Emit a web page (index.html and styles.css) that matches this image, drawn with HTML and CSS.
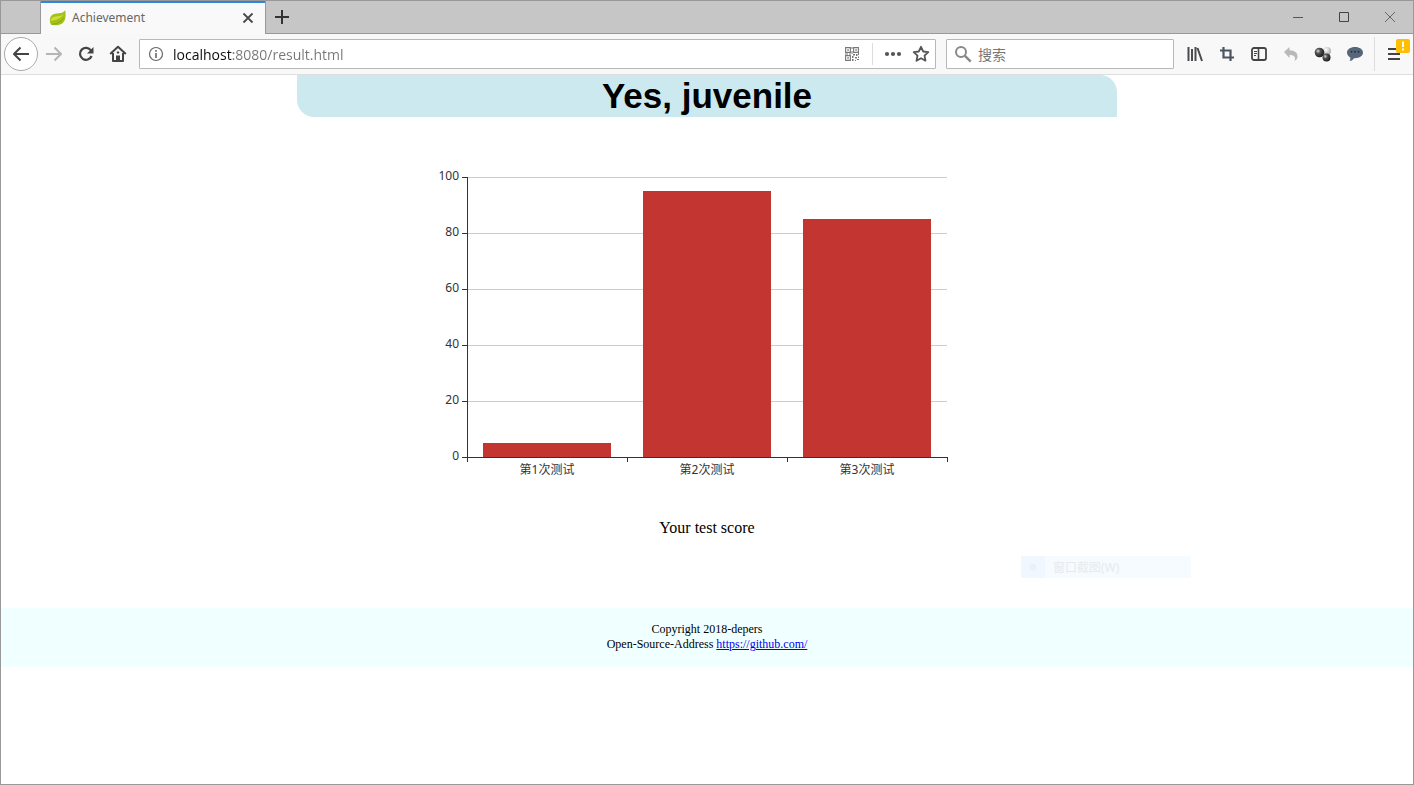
FILE: index.html
```html
<!DOCTYPE html>
<html lang="en">
<head>
<meta charset="utf-8">
<title>Achievement</title>
<link rel="stylesheet" href="styles.css">
</head>
<body>
<div class="window">
  <header class="chrome">
    <div class="tabstrip">
      <div class="tab">
        <svg class="favicon" width="18" height="18" viewBox="0 0 18 18" aria-hidden="true">
          <path fill="#a3c11a" d="M16.200 1.200c.8 4 .7 9-1.700 12-3 3.600-9.300 3.500-12.600 2.300C.4 12.400.3 8.200 3 6c3.500-2.600 10.500-.6 13.200-4.800z"/>
          <path fill="#cfdf35" d="M15 4c-1.600 3-4.600 3.200-8 3.400C3.600 7.700 1.700 9 1.800 12c4-1 10.700-1.800 13.200-8z"/>
          <path fill="none" stroke="#86a81c" d="M2.500 15.300c4.500-.2 9.500-2 12-6.300"/>
        </svg>
        <span class="tab-title">Achievement</span>
        <button class="tab-close" aria-label="Close tab"><svg width="12" height="12" viewBox="0 0 12 12"><path d="M1.500 1.500l9 9M10.500 1.500l-9 9" stroke="#4a4a4a" stroke-width="1.800" fill="none"/></svg></button>
      </div>
      <button class="new-tab" aria-label="New tab"><svg width="14" height="14" viewBox="0 0 14 14"><path d="M7 0v14M0 7h14" stroke="#333" stroke-width="2"/></svg></button>
      <div class="window-buttons">
        <button aria-label="Minimize"><svg width="12" height="12" viewBox="0 0 12 12"><path d="M1 6.500h10" stroke="#555"/></svg></button>
        <button aria-label="Maximize"><svg width="12" height="12" viewBox="0 0 12 12"><path d="M1.500 1.500h9v9h-9z" stroke="#444" fill="none"/></svg></button>
        <button aria-label="Close"><svg width="12" height="12" viewBox="0 0 12 12"><path d="M1 1l10 10M11 1L1 11" stroke="#666" fill="none"/></svg></button>
      </div>
    </div>
    <div class="toolbar">
      <nav class="nav-buttons">
        <button class="back" aria-label="Back"><svg width="18" height="18" viewBox="0 0 18 18"><path d="M17 9H2M8.500 2.500L2 9l6.500 6.500" stroke="#444" stroke-width="2" fill="none" stroke-linejoin="round"/></svg></button>
        <button class="tool" aria-label="Forward"><svg width="18" height="18" viewBox="0 0 18 18"><path d="M1 9h15M9.500 2.500L16 9l-6.500 6.500" stroke="#b5b5b5" stroke-width="2" fill="none" stroke-linejoin="round"/></svg></button>
        <button class="tool" aria-label="Reload"><svg width="16" height="16" viewBox="0 0 16 16"><path d="M13 4.500A6 6 0 1 0 13.600 10" stroke="#444" stroke-width="2.200" fill="none"/><path d="M15.500 1v6.500H9z" fill="#444"/></svg></button>
        <button class="tool" aria-label="Home"><svg width="18" height="18" viewBox="0 0 18 18"><path d="M1.200 9L9 1.700 16.800 9M4 8v8h10V8" stroke="#444" stroke-width="2" fill="none" stroke-linejoin="round"/><path d="M7 16v-5.500h4V16z" fill="#444"/><path d="M9 6l1.500 1.500L9 9 7.500 7.500z" fill="#444"/></svg></button>
      </nav>
      <div class="field url-field">
        <svg class="info" width="16" height="16" viewBox="0 0 16 16" aria-hidden="true"><circle cx="8" cy="8" r="6.500" stroke="#666" stroke-width="1.200" fill="none"/><path d="M8 7v5M8 4v1.800" stroke="#666" stroke-width="1.600"/></svg>
        <input class="url-input" type="text" aria-label="Address" value="localhost:8080/result.html">
        <button class="field-button" aria-label="QR code"><svg width="16" height="16" viewBox="0 0 16 16"><g fill="none" stroke="#777" stroke-width="1.100"><path d="M1.600 1.600h4.800v4.800H1.600zM9.600 1.600h4.800v4.800H9.600zM1.600 9.600h4.800v4.800H1.600z"/></g><path fill="#777" d="M3.300 3.300h1.500v1.500H3.300zM11.300 3.300h1.500v1.500h-1.500zM3.300 11.300h1.500v1.500H3.300zM7.500 1h1v2h-1zM7.500 5h1v3h-1zM1 7.500h3v1H1zM5 7.500h2v1H5zM9 8h2v1.500H9zM12 8h1.500v2H12zM14 7h1v2h-1zM8 10h1.500v2H8zM11 11h2v1.500h-2zM13 13h2v1h-2zM14 10.500h1V12h-1zM8 13h1.500v2H8zM11 14h1v1h-1z"/></svg></button>
        <span class="field-divider"></span>
        <button class="field-button" aria-label="Page actions"><svg width="18" height="6" viewBox="0 0 18 6"><g fill="#555"><circle cx="3" cy="3" r="2.100"/><circle cx="9" cy="3" r="2.100"/><circle cx="15" cy="3" r="2.100"/></g></svg></button>
        <button class="field-button" aria-label="Bookmark this page"><svg width="18" height="18" viewBox="0 0 18 18"><path d="M9 1.800l2.200 4.700 5.100.6-3.800 3.500 1 5.100L9 13.200l-4.500 2.500 1-5.100L1.700 7.100l5.100-.6z" stroke="#555" stroke-width="1.800" fill="none" stroke-linejoin="round"/></svg></button>
      </div>
      <div class="field search-field">
        <svg width="18" height="18" viewBox="0 0 18 18" aria-hidden="true"><circle cx="7" cy="7" r="5" stroke="#888" stroke-width="2" fill="none"/><path d="M10.700 10.700l6 6" stroke="#888" stroke-width="2.400"/></svg>
        <input class="search-input" type="text" aria-label="搜索" placeholder="搜索">
      </div>
      <div class="tools">
        <button class="tool" aria-label="Library"><svg width="16" height="16" viewBox="0 0 16 16"><path d="M1.500 1v14M5 3v12M8.500 1v14M10.500 2l4.500 13" stroke="#4a4a4f" stroke-width="2" fill="none"/></svg></button>
        <button class="tool" aria-label="Screenshot"><svg width="16" height="16" viewBox="0 0 16 16"><path d="M4.500 1v10.500H15M1 4.500h10.500V15" stroke="#4b5560" stroke-width="2.200" fill="none"/></svg></button>
        <button class="tool" aria-label="Sidebars"><svg width="16" height="16" viewBox="0 0 16 16"><rect x="1" y="2" width="14" height="12" rx="2" stroke="#444" stroke-width="1.800" fill="none"/><path d="M7.500 2v12" stroke="#444" stroke-width="1.600"/><path d="M3 5.500h3M3 7.500h3M3 9.500h2" stroke="#444"/></svg></button>
        <button class="tool" aria-label="Undo"><svg width="16" height="16" viewBox="0 0 16 16"><path d="M1 6l5.500-5v3.200c5.500 0 8.500 3 8 6.800-.3 2-1.500 3.200-3 4 1.500-3.500.2-6-5-6V12z" fill="#b9b9b9"/></svg></button>
        <button class="tool" aria-label="Proxy"><svg width="18" height="18" viewBox="0 0 18 18"><defs><radialGradient id="dark" cx=".35" cy=".35" r=".7"><stop offset="0" stop-color="#ddd"/><stop offset=".35" stop-color="#555"/><stop offset="1" stop-color="#161616"/></radialGradient><radialGradient id="pale" cx=".35" cy=".35" r=".7"><stop offset="0" stop-color="#fff"/><stop offset="1" stop-color="#aaa"/></radialGradient></defs><circle cx="13" cy="6" r="4" fill="url(#pale)"/><circle cx="5.500" cy="7.500" r="4.800" fill="url(#dark)"/><circle cx="12.500" cy="12.500" r="4" fill="url(#dark)"/></svg></button>
        <button class="tool" aria-label="Messages"><svg width="18" height="16" viewBox="0 0 18 16"><path d="M9 1c4.600 0 8 2.300 8 5.600s-3.400 5.600-8 5.600l-1 0c-1 1.500-2.500 2.600-4.500 2.800.8-1 1-2 .8-3.500C2.200 10.400 1 8.800 1 6.600 1 3.300 4.400 1 9 1z" fill="#56677a"/><g fill="#26313d"><circle cx="5.500" cy="5.800" r="1"/><circle cx="9" cy="5.800" r="1"/><circle cx="12.500" cy="5.800" r="1"/></g></svg></button>
      </div>
      <button class="menu" aria-label="Open menu">
        <svg width="14" height="14" viewBox="0 0 14 14"><path d="M1 2h12M1 7h12M1 12h12" stroke="#444" stroke-width="2"/></svg>
        <svg class="alert" width="14" height="14" viewBox="0 0 14 14"><rect width="14" height="14" rx="2" fill="#ffbf00"/><path d="M7 2.500v5.500M7 9.500v2" stroke="#fff" stroke-width="2"/></svg>
      </button>
    </div>
  </header>

  <main class="page">
    <h1 class="banner">Yes, juvenile</h1>
    <svg class="chart" width="600" height="400" viewBox="0 0 600 400" role="img" aria-label="Your test score">
      <path class="grid" d="M60 60.500h480M60 116.500h480M60 172.500h480M60 228.500h480M60 284.500h480"/>
      <g class="bars">
        <rect x="76" y="326" width="128" height="14"/>
        <rect x="236" y="74" width="128" height="266"/>
        <rect x="396" y="102" width="128" height="238"/>
      </g>
      <path class="axis" d="M60.500 60v285M55 60.500h5M55 116.500h5M55 172.500h5M55 228.500h5M55 284.500h5M55 340.500h486M220.500 340v5M380.500 340v5M540.500 340v5"/>
      <g class="y-labels">
        <text x="52" y="63">100</text>
        <text x="52" y="119">80</text>
        <text x="52" y="175">60</text>
        <text x="52" y="231">40</text>
        <text x="52" y="287">20</text>
        <text x="52" y="343">0</text>
      </g>
      <g class="x-labels">
        <text x="140" y="357">第1次测试</text>
        <text x="300" y="357">第2次测试</text>
        <text x="460" y="357">第3次测试</text>
      </g>
    </svg>
    <p class="caption">Your test score</p>
    <div class="ghost-menu">
      <span class="ghost-icon"></span>
      <span>窗口截图(W)</span>
    </div>
    <footer class="footer">
      Copyright 2018-depers<br>
      Open-Source-Address <a href="https://github.com/">https://github.com/</a>
    </footer>
  </main>
</div>
</body>
</html>
```
FILE: styles.css
```css
* {
  box-sizing: border-box;
}

body {
  margin: 0;
  background: #fff;
}

button {
  display: flex;
  align-items: center;
  justify-content: center;
  padding: 0;
  border: 0;
  background: none;
}

.window {
  min-height: 100vh;
  border: 1px solid #999;
}

.chrome {
  font-family: "Open Sans", "Noto Sans CJK SC", sans-serif;
}

.tabstrip {
  display: flex;
  height: 33px;
  padding-left: 39px;
  background: #c6c6c6;
  border-bottom: 1px solid #999;
}

.tab {
  display: flex;
  align-items: center;
  width: 226px;
  height: 33px;
  padding: 0 9px 0 8px;
  background: #f9f9f9;
  border: solid #999;
  border-width: 0 1px;
  box-shadow: inset 0 2px #2f86dd;
}

.tab-title {
  flex: 1;
  margin-left: 5px;
  color: #666;
  font-family: "Noto Sans", sans-serif;
  font-size: 12px;
}

.tab-close {
  width: 16px;
  height: 16px;
}

.new-tab {
  width: 32px;
}

.window-buttons {
  display: flex;
  margin-left: auto;
}

.window-buttons button {
  width: 46px;
}

.toolbar {
  display: flex;
  align-items: center;
  height: 41px;
  padding-left: 3px;
  background: #f8f8f8;
  border-bottom: 1px solid #dedede;
}

.nav-buttons,
.tools {
  display: flex;
  align-items: center;
}

.back {
  width: 34px;
  height: 34px;
  background: #fff;
  border: 1px solid #aaa;
  border-radius: 50%;
}

.tool {
  width: 32px;
  height: 32px;
}

.field {
  display: flex;
  align-items: center;
  height: 30px;
  background: #fff;
  border: 1px solid #b8b8b8;
  border-radius: 1px;
}

.field input {
  flex: 1;
  min-width: 0;
  height: 28px;
  padding: 0;
  border: 0;
  outline: 0;
  font-family: inherit;
  font-size: 14px;
}

.url-field {
  flex: 1;
  margin-left: 5px;
  padding-left: 8px;
}

.field .url-input {
  margin-left: 9px;
  background: linear-gradient(90deg, #0c0c0d 60px, #767676 60px);
  background-clip: text;
  -webkit-background-clip: text;
  color: transparent;
}

.field-button {
  width: 28px;
  height: 28px;
}

.field-divider {
  width: 1px;
  height: 22px;
  margin: 0 6px;
  background: #ddd;
}

.search-field {
  width: 228px;
  margin: 0 5px 0 10px;
  padding-left: 7px;
}

.search-input {
  margin-left: 6px;
}

.search-input::placeholder {
  color: #777;
}

.menu {
  position: relative;
  width: 39px;
  height: 34px;
  margin-left: 3px;
  border-left: 1px solid #ddd;
}

.alert {
  position: absolute;
  top: 2px;
  right: 3px;
}

.page {
  font-family: "Liberation Serif", serif;
  text-align: center;
}

.banner {
  width: 820px;
  max-width: 100%;
  margin: 0 auto;
  background: #cce9ef;
  border-radius: 0 17px;
  font-family: "Liberation Sans", sans-serif;
  font-size: 35px;
  line-height: 42px;
}

.chart {
  display: block;
  margin: 0 auto;
  fill: #333;
  font-family: "Noto Sans", "Noto Sans CJK SC", sans-serif;
  font-size: 12px;
}

.grid {
  stroke: #ccc;
}

.axis {
  stroke: #333;
}

.bars {
  fill: #c23531;
}

.y-labels {
  text-anchor: end;
}

.x-labels {
  text-anchor: middle;
}

.caption {
  margin: 0;
  padding-top: 2px;
  font-size: 16px;
  line-height: 18px;
}

.ghost-menu {
  display: flex;
  align-items: center;
  gap: 8px;
  width: 170px;
  height: 22px;
  margin: 19px 222px 30px auto;
  background: #f6fbff;
  color: #e6eaee;
  font-family: "Noto Sans", "Noto Sans CJK SC", sans-serif;
  font-size: 12px;
}

.ghost-icon {
  width: 24px;
  height: 22px;
  background: radial-gradient(circle, #e8f0fa 3px, #f1f7fe 4px);
}

.footer {
  padding: 14px 0 15px;
  background: #f0ffff;
  font-size: 12px;
  line-height: 15px;
}

.footer a {
  color: #0000ee;
}
```
